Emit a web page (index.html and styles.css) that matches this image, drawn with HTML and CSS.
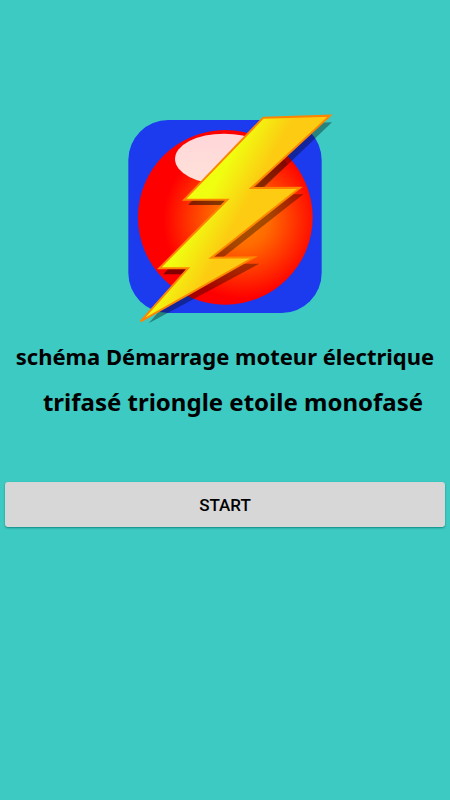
FILE: index.html
```
<!DOCTYPE html>
<html lang="fr">
<head>
    <meta charset="UTF-8">
    <meta name="viewport" content="width=device-width, initial-scale=1.0">
    <title>Schéma Démarrage</title>
    <link rel="stylesheet" href="styles.css">
</head>
<body>
    <main class="container">
        <svg class="logo" viewBox="0 0 660 675" aria-hidden="true">
            <defs>
                <radialGradient id="ball" gradientUnits="userSpaceOnUse" cx="365" cy="345" r="235">
                    <stop offset="0" stop-color="#ff8400"/>
                    <stop offset="0.35" stop-color="#ff6a00"/>
                    <stop offset="1" stop-color="#ff0000"/>
                </radialGradient>
                <linearGradient id="bolt" gradientUnits="userSpaceOnUse" x1="275" y1="250" x2="375" y2="305">
                    <stop offset="0" stop-color="#f0ff10"/>
                    <stop offset="1" stop-color="#fccb12"/>
                </linearGradient>
                <linearGradient id="shine" x1="0" y1="0" x2="0" y2="1">
                    <stop offset="0" stop-color="#ffd6da"/>
                    <stop offset="1" stop-color="#ffe2d8"/>
                </linearGradient>
            </defs>
            <rect x="25" y="45" width="580" height="579" rx="120" fill="#1c3aee"/>
            <circle cx="316" cy="337" r="262" fill="url(#ball)"/>
            <ellipse cx="312" cy="162" rx="147" ry="76" fill="url(#shine)"/>
            <path d="M450 58L636 52L412 266L550 268L285 476L418 476L86 655L214 508L130 508L338 300L205 300Z" fill="#000" fill-opacity="0.35"/>
            <path class="shade" d="M322 284L312 300L205 300L213 284ZM204 490L192 508L130 508L144 490ZM405 249L425 249L503 178L490 160Z"/>
            <path d="M430 38L630 32L394 249L540 248L274 458L402 457L62 649L204 490L118 490L322 284L193 284Z" fill="url(#bolt)" stroke="#ff8400" stroke-width="6"/>
        </svg>
        <h1 class="title">
            <span class="title-top">schéma Démarrage moteur électrique</span>
            <span class="title-bottom">trifasé triongle etoile monofasé</span>
        </h1>
        <button type="button" class="start">START</button>
    </main>
</body>
</html>
```
FILE: styles.css
```
body {
    margin: 0;
    min-height: 100vh;
    background-color: #3dcac2;
    font-family: "Noto Sans", sans-serif;
    color: #000;
}
.container {
    display: flex;
    flex-direction: column;
    align-items: center;
    padding: 105px 5px 0;
}
.logo {
    width: 220px;
    height: 225px;
    margin-left: 10px;
}
.shade {
    fill: #000;
    fill-opacity: 0.2;
}
.title {
    display: flex;
    flex-direction: column;
    align-items: center;
    margin: 3px 0 57px;
    font-weight: bold;
    line-height: 46px;
    white-space: nowrap;
}
.title-top {
    font-size: 22px;
}
.title-bottom {
    margin-left: 16px;
    font-size: 24px;
}
.start {
    width: 100%;
    height: 45px;
    border: none;
    border-radius: 3px;
    background-color: #d7d7d7;
    box-shadow: 0 1px 2px rgba(0, 110, 105, 0.7);
    color: #000;
    font-family: Roboto, sans-serif;
    font-size: 17px;
    font-weight: 500;
    cursor: pointer;
}
.start:hover {
    background-color: #c8c8c8;
}
```
